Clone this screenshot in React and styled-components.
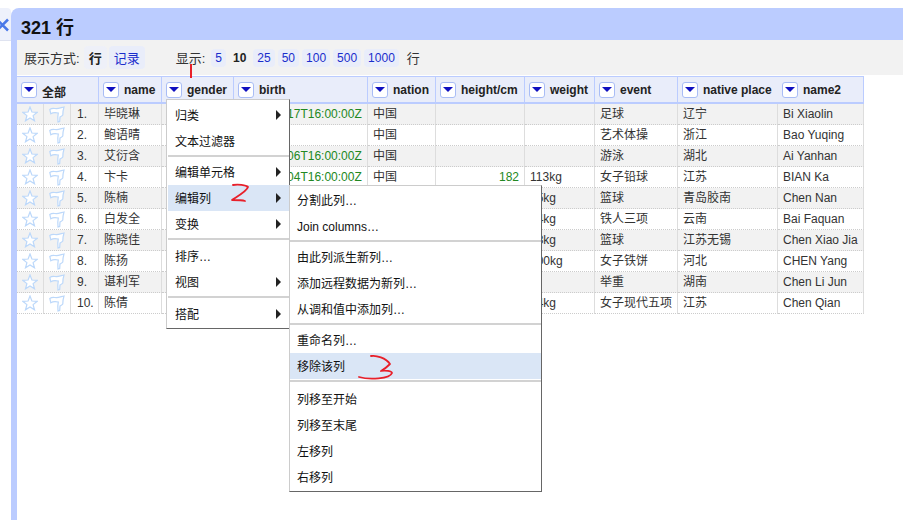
import React from "react";
import styled, { createGlobalStyle } from "styled-components";

const columns = [
  { key: "name", label: "name", width: 63 },
  { key: "gender", label: "gender", width: 72 },
  { key: "birth", label: "birth", width: 134 },
  { key: "nation", label: "nation", width: 68 },
  { key: "height", label: "height/cm", width: 89 },
  { key: "weight", label: "weight", width: 70 },
  { key: "event", label: "event", width: 83 },
  { key: "place", label: "native place", width: 100, open: true },
  { key: "name2", label: "name2", width: 86 },
];

const rows = [
  { name: "毕晓琳", birth: "1987-09-17T16:00:00Z", nation: "中国", event: "足球", place: "辽宁", name2: "Bi Xiaolin" },
  { name: "鲍语晴", nation: "中国", event: "艺术体操", place: "浙江", name2: "Bao Yuqing" },
  { name: "艾衍含", birth: "2004-10-06T16:00:00Z", nation: "中国", event: "游泳", place: "湖北", name2: "Ai Yanhan" },
  { name: "卞卡", birth: "1993-01-04T16:00:00Z", nation: "中国", height: 182, weight: "113kg", event: "女子铅球", place: "江苏", name2: "BIAN Ka" },
  { name: "陈楠", weight: "75kg", event: "篮球", place: "青岛胶南", name2: "Chen Nan" },
  { name: "白发全", weight: "54kg", event: "铁人三项", place: "云南", name2: "Bai Faquan" },
  { name: "陈晓佳", weight: "78kg", event: "篮球", place: "江苏无锡", name2: "Chen Xiao Jia" },
  { name: "陈扬", weight: "100kg", event: "女子铁饼", place: "河北", name2: "CHEN Yang" },
  { name: "谌利军", event: "举重", place: "湖南", name2: "Chen Li Jun" },
  { name: "陈倩", weight: "54kg", event: "女子现代五项", place: "江苏", name2: "Chen Qian" },
];

const columnMenu = [
  [{ label: "归类", sub: true }, { label: "文本过滤器" }],
  [{ label: "编辑单元格", sub: true }, { label: "编辑列", sub: true, active: true }, { label: "变换", sub: true }],
  [{ label: "排序…" }, { label: "视图", sub: true }],
  [{ label: "搭配", sub: true }],
];

const editColumnMenu = [
  [{ label: "分割此列…" }, { label: "Join columns…" }],
  [{ label: "由此列派生新列…" }, { label: "添加远程数据为新列…" }, { label: "从调和值中添加列…" }],
  [{ label: "重命名列…" }, { label: "移除该列", active: true }],
  [{ label: "列移至开始" }, { label: "列移至末尾" }, { label: "左移列" }, { label: "右移列" }],
];

export default function App() {
  return (
    <>
      <GlobalStyle />
      <Page>
        <LeftPanel>
          <CloseTab>
            <svg width="11" height="14" viewBox="0 0 11 14">
              <path d="M8 1.500-3 12.500M8 12.500-3 1.500" fill="none" stroke="#4a78e8" strokeWidth="2.500" />
            </svg>
          </CloseTab>
        </LeftPanel>
        <Main>
          <TitleBar>321 行</TitleBar>
          <Content>
            <ViewBar>
              <BarGroup>
                展示方式:
                <ModePill $current>行</ModePill>
                <ModePill>记录</ModePill>
              </BarGroup>
              <BarGroup>
                显示:
                <PageSizes>
                  <Pill>5</Pill>
                  <Pill $current>10</Pill>
                  <Pill>25</Pill>
                  <Pill>50</Pill>
                  <Pill>100</Pill>
                  <Pill>500</Pill>
                  <Pill>1000</Pill>
                </PageSizes>
                <Unit>行</Unit>
              </BarGroup>
            </ViewBar>
            <Table>
              <colgroup>
                <col width="27" />
                <col width="27" />
                <col width="28" />
                {columns.map((c) => (
                  <col key={c.key} width={c.width} />
                ))}
              </colgroup>
              <thead>
                <tr>
                  <HeadCell colSpan={3}>
                    <HeadInner>
                      <DropButton />
                      <AllLabel>全部</AllLabel>
                    </HeadInner>
                  </HeadCell>
                  {columns.map((c) => (
                    <HeadCell key={c.key} $open={c.open}>
                      <HeadInner>
                        <DropButton />
                        {c.label}
                      </HeadInner>
                    </HeadCell>
                  ))}
                </tr>
              </thead>
              <tbody>
                {rows.map((row, i) => (
                  <Row key={i} $odd={i % 2 === 0}>
                    <IconCell>
                      <StarIcon />
                    </IconCell>
                    <IconCell>
                      <FlagIcon />
                    </IconCell>
                    <IndexCell>{i + 1}.</IndexCell>
                    {columns.map((c) => (
                      <Cell
                        key={c.key}
                        $green={c.key === "birth" || c.key === "height"}
                        $right={c.key === "height"}
                      >
                        {row[c.key]}
                      </Cell>
                    ))}
                  </Row>
                ))}
              </tbody>
            </Table>
          </Content>
        </Main>

        <Tick />
        <MainMenu>
          <MenuBody groups={columnMenu} gaps={[5, 6, 6]} />
        </MainMenu>
        <SubMenu>
          <MenuBody groups={editColumnMenu} gaps={[5, 5, 7]} />
        </SubMenu>

        <Ink width="24" height="24" viewBox="0 0 24 24" $x={228} $y={182}>
          <path d="M5 3C10 2 18 3 20 5 19 9 10 14 4 18 10 18 14 18 17 19" />
        </Ink>
        <Ink width="40" height="30" viewBox="0 0 40 30" $x={357} $y={353}>
          <path d="M14 3C19 2 29 5 33 11 29 15 26 17 24 18 28 17 35 18 35 20 33 26 12 27 2 24" />
        </Ink>
      </Page>
    </>
  );
}

function MenuBody({ groups, gaps }) {
  return groups.map((items, i) => (
    <React.Fragment key={i}>
      {i > 0 && <MenuSeparator $gap={gaps[i - 1]} />}
      {items.map((item) => (
        <MenuItem key={item.label} $active={item.active}>
          {item.label}
          {item.sub && <SubArrow />}
        </MenuItem>
      ))}
    </React.Fragment>
  ));
}

function StarIcon() {
  return (
    <svg width="16" height="16" viewBox="0 0 16 16">
      <path
        d="M8 1 9.900 6 15.200 6.300 11.100 9.600 12.500 14.800 8 11.900 3.500 14.800 4.900 9.600 .8 6.300 6.100 6Z"
        fill="#fff"
        stroke="#bcd8fa"
        strokeWidth="1.200"
      />
    </svg>
  );
}

function FlagIcon() {
  return (
    <svg width="16" height="17" viewBox="0 0 16 17">
      <path
        d="M.8 3.500C3 1.800 5 2.600 7.500 2.600 10 2.600 12.500 1.500 15 1 14.200 3.500 13.800 6 13.800 9 13 10.200 12 10.500 11 11L10.700 15.500 9 16 8.800 11 9.300 7C6.500 6.300 3.500 6.600 1.800 7.800Z"
        fill="#fff"
        stroke="#bcd8fa"
        strokeWidth="1.200"
      />
    </svg>
  );
}

const GlobalStyle = createGlobalStyle`
  html, body {
    margin: 0;
    background: #fff;
  }
  body {
    font-family: "Liberation Sans", "Noto Sans CJK SC", sans-serif;
    font-size: 12px;
    color: #222;
  }
`;

const Page = styled.div`
  position: relative;
  width: 903px;
  height: 520px;
  overflow: hidden;
  display: flex;
`;

const LeftPanel = styled.div`
  width: 11px;
  flex-shrink: 0;
  padding-top: 8px;
`;

const CloseTab = styled.div`
  height: 33px;
  background: #eef1fb;
  border-top-right-radius: 4px;
  border-bottom: 1px solid #dfe3f0;
  padding-top: 10px;
  box-sizing: border-box;
  svg {
    display: block;
  }
`;

const Main = styled.div`
  flex: 1;
  margin-top: 8px;
  background: #bbccff;
  border-top-left-radius: 8px;
  display: flex;
  flex-direction: column;
`;

const TitleBar = styled.h1`
  margin: 0;
  height: 32px;
  line-height: 40px;
  padding-left: 10px;
  font-size: 18px;
  font-weight: bold;
  color: #111;
`;

const Content = styled.div`
  flex: 1;
  margin-left: 6px;
  background: #fff;
`;

const ViewBar = styled.div`
  height: 35px;
  background: #f2f2f2;
  margin-bottom: 1px;
  padding-left: 7px;
  display: flex;
  align-items: center;
  gap: 31px;
  font-size: 13px;
  color: #333;
`;

const BarGroup = styled.div`
  display: flex;
  align-items: center;
`;

const ModePill = styled.span`
  margin-left: ${(p) => (p.$current ? 4 : 2)}px;
  padding: 2px 5px;
  border-radius: 4px;
  background: ${(p) => (p.$current ? "#eef0f8" : "#e9edfa")};
  color: ${(p) => (p.$current ? "#222" : "#1a2ecc")};
  font-weight: ${(p) => (p.$current ? "bold" : "normal")};
`;

const PageSizes = styled.div`
  display: flex;
  gap: 3px;
  margin-left: 6px;
`;

const Pill = styled.span`
  padding: 2px 4px;
  border-radius: 4px;
  font-size: 12px;
  background: ${(p) => (p.$current ? "transparent" : "#e9edfa")};
  color: ${(p) => (p.$current ? "#222" : "#1a2ecc")};
  font-weight: ${(p) => (p.$current ? "bold" : "normal")};
`;

const Unit = styled.span`
  margin-left: 8px;
`;

const Table = styled.table`
  border-collapse: separate;
  border-spacing: 0;
  table-layout: fixed;
  width: 847px;
`;

const HeadCell = styled.th`
  height: 28px;
  padding: 1px 0 0 4px;
  box-sizing: border-box;
  background: #e9edfa;
  border-top: 1px solid #bbccff;
  border-bottom: 2px solid #bbccff;
  border-right: ${(p) => (p.$open ? "none" : "1px solid #bbccff")};
  text-align: left;
  white-space: nowrap;
  font-size: 12px;
  font-weight: bold;
  color: #222;
`;

const HeadInner = styled.div`
  display: flex;
  align-items: center;
  gap: 5px;
`;

const DropButton = styled.span`
  position: relative;
  width: 16px;
  height: 16px;
  box-sizing: border-box;
  flex-shrink: 0;
  background: #fff;
  border: 1px solid #a9bdf5;
  border-radius: 3px;
  &::after {
    content: "";
    position: absolute;
    left: 2px;
    top: 4px;
    border-style: solid;
    border-width: 5px 5px 0;
    border-color: #1010c0 transparent transparent;
  }
`;

const AllLabel = styled.span`
  padding-top: 2px;
`;

const Row = styled.tr`
  background: ${(p) => (p.$odd ? "#f2f2f2" : "#fff")};
`;

const Cell = styled.td`
  height: 21px;
  padding: 0 5px 1px;
  box-sizing: border-box;
  line-height: 14px;
  border-right: 1px solid #ddd;
  border-bottom: 1px dotted #ccc;
  white-space: nowrap;
  overflow: hidden;
  color: ${(p) => (p.$green ? "#282" : "#333")};
  text-align: ${(p) => (p.$right ? "right" : "left")};
`;

const IconCell = styled(Cell)`
  padding: 0;
  text-align: center;
  svg {
    display: block;
    margin: 0 auto;
  }
`;

const IndexCell = styled(Cell)`
  padding-left: 6px;
`;

const Tick = styled.div`
  position: absolute;
  left: 190px;
  top: 64px;
  width: 2px;
  height: 14px;
  background: #e8202a;
`;

const MenuBox = styled.div`
  position: absolute;
  box-sizing: border-box;
  background: #fff;
  border: 1px solid #ccc;
  border-right-color: #666;
  border-bottom-color: #666;
`;

const MainMenu = styled(MenuBox)`
  left: 166px;
  top: 99px;
  width: 124px;
  height: 230px;
  padding: 2px 0 0 1px;
`;

const SubMenu = styled(MenuBox)`
  left: 289px;
  top: 185px;
  width: 253px;
  height: 307px;
  padding: 1px 0 0 0;
`;

const MenuItem = styled.div`
  position: relative;
  height: 26px;
  line-height: 28px;
  padding-left: 7px;
  font-size: 12px;
  color: #111;
  background: ${(p) => (p.$active ? "#dae6f6" : "transparent")};
`;

const SubArrow = styled.span`
  position: absolute;
  right: 8px;
  top: 8px;
  border-style: solid;
  border-width: 5px 0 5px 5px;
  border-color: transparent transparent transparent #222;
`;

const MenuSeparator = styled.div`
  height: ${(p) => p.$gap}px;
  box-sizing: border-box;
  padding-top: 1px;
  &::before {
    content: "";
    display: block;
    height: 2px;
    background: #d2d2d2;
  }
`;

const Ink = styled.svg`
  position: absolute;
  left: ${(p) => p.$x}px;
  top: ${(p) => p.$y}px;
  fill: none;
  stroke: #e8202a;
  stroke-width: 1.800;
  stroke-linecap: round;
  stroke-linejoin: round;
`;
